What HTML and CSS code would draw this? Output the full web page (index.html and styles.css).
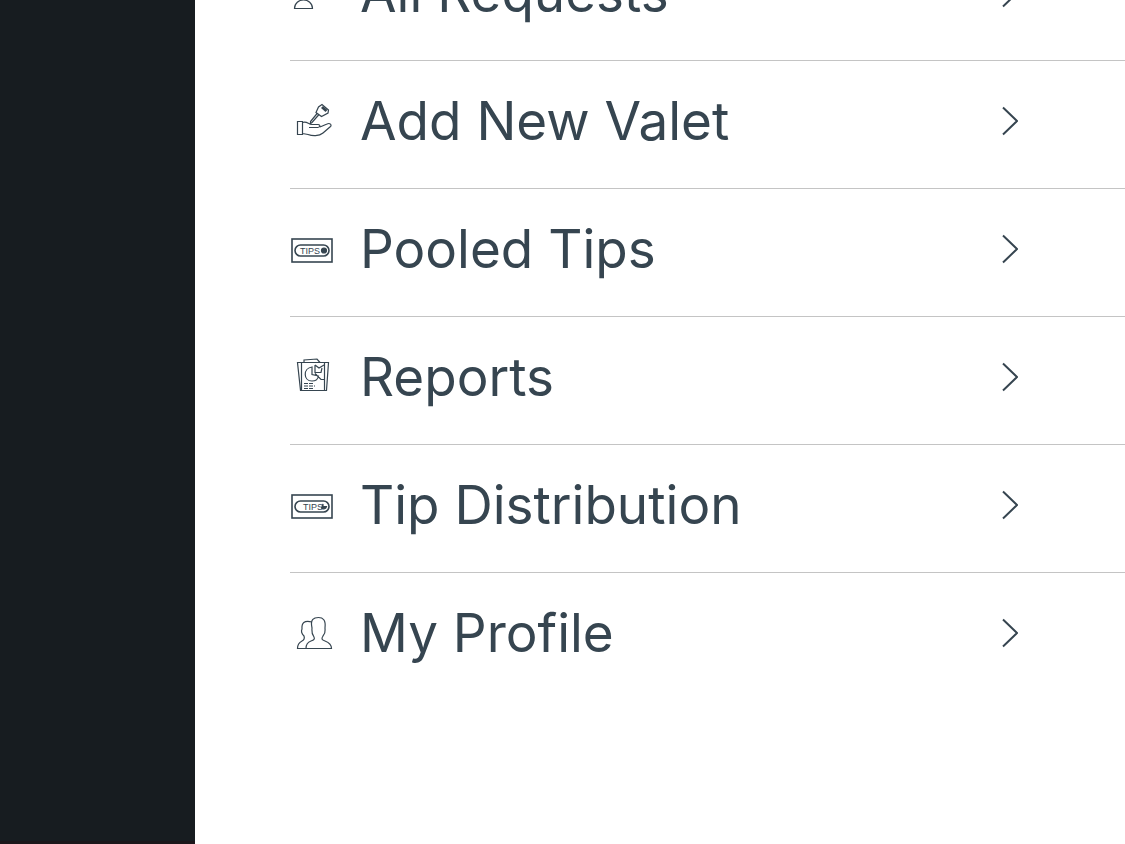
FILE: index.html
```html
<!DOCTYPE html>
<html lang="en">
<head>
    <meta charset="UTF-8">
    <meta name="viewport" content="width=device-width, initial-scale=1.0">
    <title>Valet Menu</title>
    <link rel="stylesheet" href="styles.css">
</head>
<body>
    <div class="page">
        <aside class="sidebar"></aside>

        <nav class="menu">
            <!-- All Requests -->
            <a class="menu-item" href="#">
                <svg class="icon" viewBox="0 0 44 44">
                    <path d="M4.500 37.500H22.500C22.500 32 18 29 13.500 29S4.500 32 4.500 37.500Z"/>
                    <circle cx="13.500" cy="23" r="5"/>
                </svg>
                <span class="label">All Requests</span>
                <svg class="chevron" viewBox="0 0 16 30"><path d="M1 1.500L15 15L1 28.500"/></svg>
            </a>

            <!-- Add New Valet -->
            <a class="menu-item" href="#">
                <svg class="icon" viewBox="0 0 44 44">
                    <path d="M7.500 22.500H12.500V35.500H7.500ZM12.500 23.500C17 22 18 25 22 25.500H28C31 26 30 28.500 27.500 28.500H19M30 28L37 25C40 23.500 42 26 40.500 27.500L33 34C29 37.500 22 37 18 35.500L12.500 34.500"/>
                    <path d="M29 15.500L22 23.500L20.500 24.500L20.500 22.500L27.500 14M26 13.500L28.500 8L32 5.500L38.500 11L38 14L31.500 17.500Z"/>
                    <path class="thick" d="M32 8L36.500 12"/>
                </svg>
                <span class="label">Add New Valet</span>
                <svg class="chevron" viewBox="0 0 16 30"><path d="M1 1.500L15 15L1 28.500"/></svg>
            </a>

            <!-- Pooled Tips -->
            <a class="menu-item" href="#">
                <svg class="icon" viewBox="0 0 44 44">
                    <rect class="frame" x="2" y="12" width="40" height="23"/>
                    <rect class="frame" x="5" y="18" width="34" height="11" rx="5.500"/>
                    <text x="10" y="27">TIPS</text>
                    <circle class="solid" cx="34" cy="23.500" r="2.500"/>
                </svg>
                <span class="label">Pooled Tips</span>
                <svg class="chevron" viewBox="0 0 16 30"><path d="M1 1.500L15 15L1 28.500"/></svg>
            </a>

            <!-- Reports -->
            <a class="menu-item" href="#">
                <svg class="icon" viewBox="0 0 44 44">
                    <path d="M11.500 7.500H34.500V35.500H11.500ZM11.500 35.500L10.500 35.500L7.500 7.500H11.500M14 7.500V5L27 4L30 7.500M34.500 7.500L38.500 7.500L36.500 35.500H34.500"/>
                    <path d="M22 12C13 13 13 26 22 26C26 26 28 24 28.500 21L22 19.500ZM25 10L29 13L34 10M25 10V17.500H31L32 13M25 18.500L31 24.500H34"/>
                    <path class="dashed" d="M14 28.500H24M14 31H25M14 33.500H24"/>
                </svg>
                <span class="label">Reports</span>
                <svg class="chevron" viewBox="0 0 16 30"><path d="M1 1.500L15 15L1 28.500"/></svg>
            </a>

            <!-- Tip Distribution -->
            <a class="menu-item" href="#">
                <svg class="icon" viewBox="0 0 44 44">
                    <rect class="frame" x="2" y="12" width="40" height="23"/>
                    <rect class="frame" x="5" y="18" width="34" height="11" rx="5.500"/>
                    <text x="13" y="27">TIPS</text>
                    <path class="solid" d="M33 21V23.500H36.500A3 3 0 0 1 31.500 25Z"/>
                </svg>
                <span class="label">Tip Distribution</span>
                <svg class="chevron" viewBox="0 0 16 30"><path d="M1 1.500L15 15L1 28.500"/></svg>
            </a>

            <!-- My Profile -->
            <a class="menu-item" href="#">
                <svg class="icon" viewBox="0 0 44 44">
                    <path d="M16 37.500C16 33 18 31 21 30C24 29 25 28 24 26C21 22 22 20 22 17C20 8 24 6.500 28.500 6.500S36 9 35 17C35 20 36 22 33 25C31 28 32 29 35 30C39 31.500 41.500 33 41.500 37.500Z"/>
                    <path d="M22 11C14 9 11.500 12 12 18C11 20 12 23 14 25C15 28 14 29 12 30C9 31.500 7.500 33 7.500 37.500H16"/>
                </svg>
                <span class="label">My Profile</span>
                <svg class="chevron" viewBox="0 0 16 30"><path d="M1 1.500L15 15L1 28.500"/></svg>
            </a>
        </nav>
    </div>
</body>
</html>
```

FILE: styles.css
```css
body {
    font-family: Inter, sans-serif;
    margin: 0;
    background-color: #fff;
    color: #364550;
}

.page {
    display: flex;
    height: 100vh;
    overflow: hidden;
}

.sidebar {
    flex: 0 0 195px;
    box-sizing: border-box;
    background-color: #171c20;
    border-bottom: 3px solid #1c171b;
}

/* list is scrolled part way past the first item */
.menu {
    flex: 1;
    margin-top: -67px;
    padding-left: 95px;
}

.menu-item {
    display: flex;
    align-items: center;
    box-sizing: border-box;
    height: 128px;
    padding-right: 107px;
    padding-bottom: 8px;
    border-bottom: 1px solid #c4c4c4;
    color: inherit;
    text-decoration: none;
}

.menu-item:last-child {
    border-bottom: none;
}

.label {
    flex: 1;
    margin-left: 26px;
    font-size: 53px;
    line-height: 64px;
}

.icon {
    width: 44px;
    height: 44px;
    fill: none;
    stroke: #364550;
    stroke-width: 1.2;
}

.icon .frame {
    stroke-width: 1.6;
}

.icon .thick {
    stroke-width: 3;
}

.icon .dashed {
    stroke-dasharray: 4 1;
}

.icon .solid {
    fill: #364550;
}

.icon text {
    font-family: "Liberation Sans", sans-serif;
    font-size: 9px;
    fill: #364550;
    stroke: none;
}

.chevron {
    width: 16px;
    height: 30px;
    fill: none;
    stroke: #364550;
    stroke-width: 2;
}
```
